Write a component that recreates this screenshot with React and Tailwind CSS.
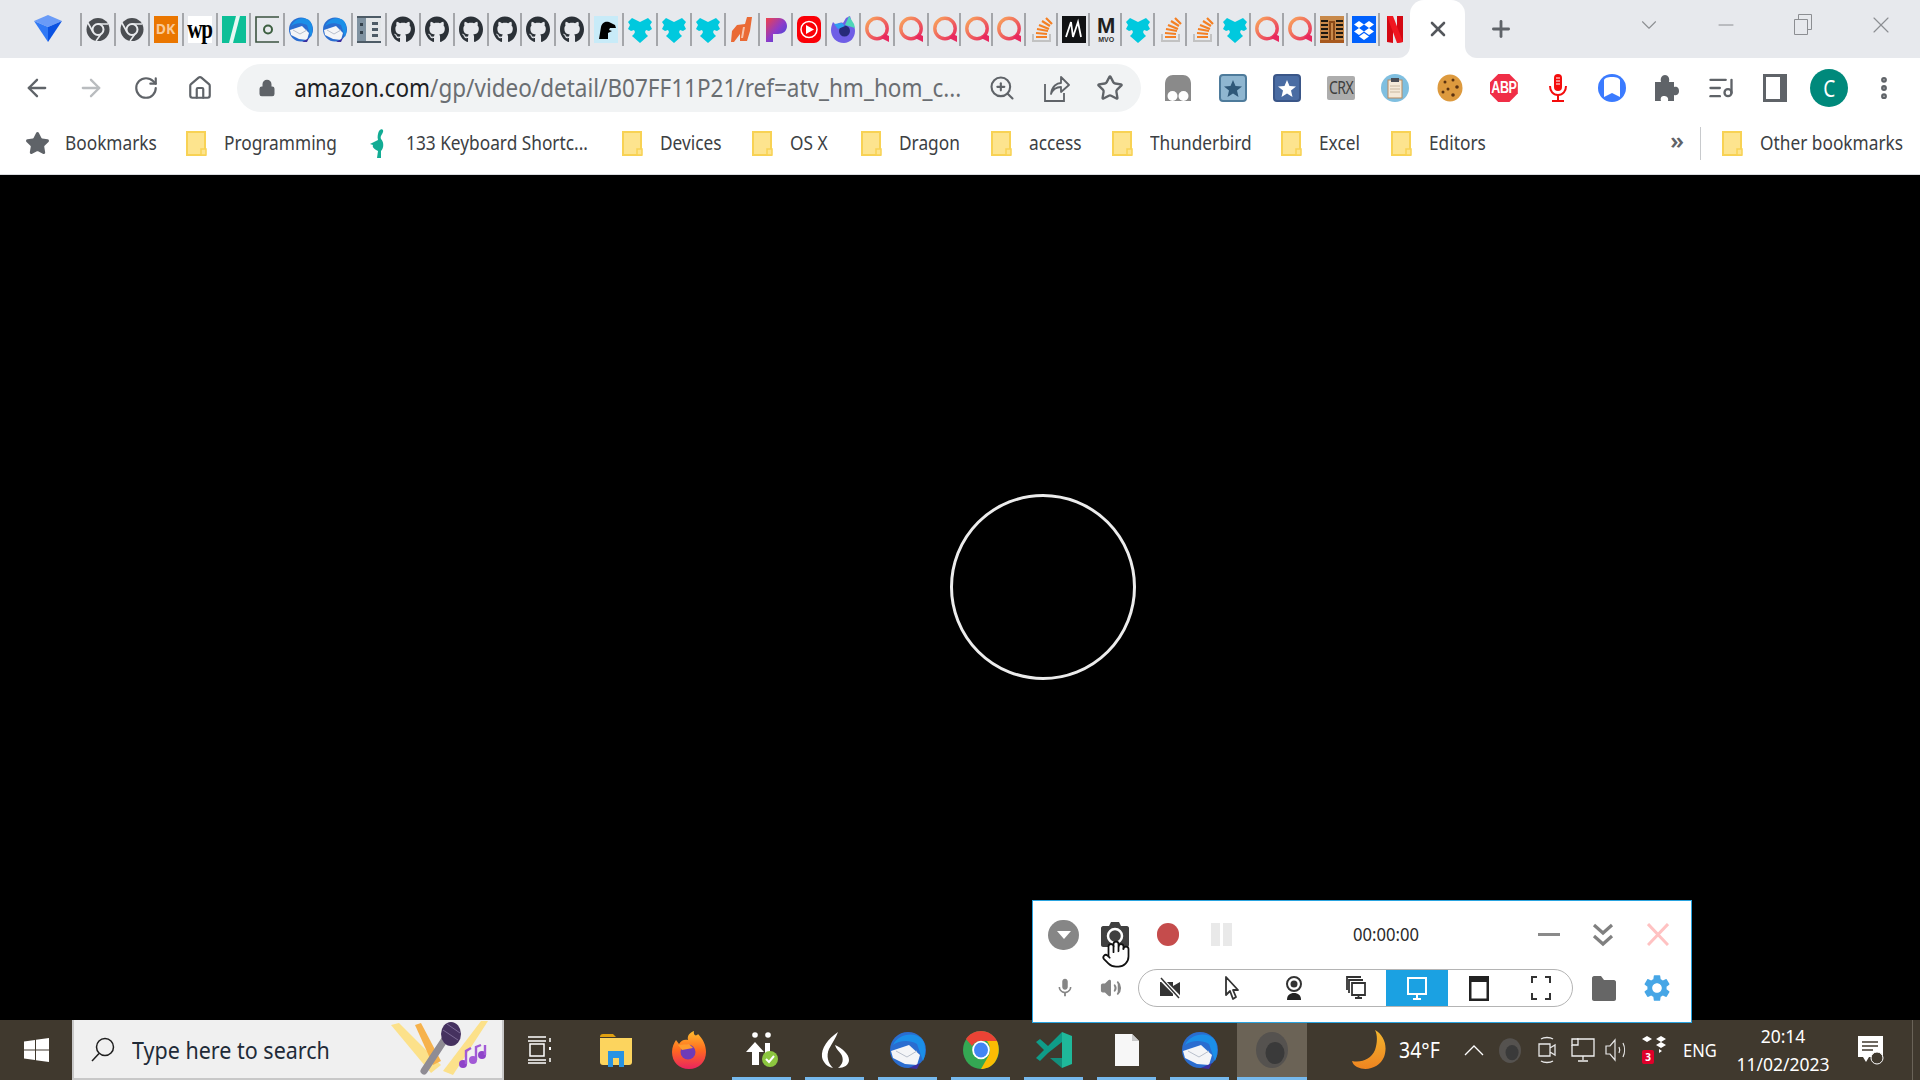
import { ArrowLeft, ArrowRight, RotateCw, House, Lock, ZoomIn, Star, ListMusic, MoreVertical, Plus, X, Minus, ChevronDown, Volume2, Hand } from 'lucide-react';
import { FaGithub } from 'react-icons/fa';
import { MdMic, MdSettings } from 'react-icons/md';

const Svg = ({ w = 24, h = 27, vw = 24, vh = 27, children }) => (
  <svg width={w} height={h} viewBox={`0 0 ${vw} ${vh}`} preserveAspectRatio="none" className="shrink-0">{children}</svg>
);

const Gem = () => (
  <Svg w={28} h={27} vw={28} vh={27}>
    <polygon points="0,6 14,0 28,6 14,12" fill="#6a9bf7" />
    <polygon points="0,6 14,12 14,27" fill="#3179f5" />
    <polygon points="28,6 14,12 14,27" fill="#0b52e2" />
  </Svg>
);

const ChromeGray = () => (
  <Svg>
    <circle cx="12" cy="13.5" r="11.5" fill="#4b4e52" />
    <circle cx="12" cy="13.5" r="5.5" fill="#4b4e52" stroke="#e8eaed" strokeWidth="2" />
    <path d="M12 8H22M7 16L2 7M15 18L10 25" stroke="#e8eaed" strokeWidth="1.6" />
  </Svg>
);

const Dk = () => (
  <div className="w-[24px] h-[27px] bg-[#ea7600] flex items-center overflow-hidden shrink-0">
    <span className="text-[#f9c998] text-[14px] font-bold leading-none pl-[2px]">DK</span>
  </div>
);

const Wp = () => (
  <div className="w-[24px] h-[27px] bg-white flex items-center justify-center shrink-0">
    <span className="inline-block scale-y-125 font-['Liberation_Serif',serif] text-black text-[21px] font-bold leading-none tracking-[-1px]">wp</span>
  </div>
);

const Huff = () => (
  <Svg>
    <rect width="24" height="27" fill="#0dbf97" />
    <polygon points="14,0 18,0 11,27 7,27" fill="#e8f8f3" />
  </Svg>
);

const Outlook = () => (
  <Svg>
    <path d="M24 1H1V26H24" fill="none" stroke="#3c5340" strokeWidth="1.6" />
    <circle cx="13" cy="13.5" r="4" fill="none" stroke="#3c5f40" strokeWidth="2" />
  </Svg>
);

const Thunderbird = () => (
  <Svg>
    <circle cx="12" cy="13.5" r="12" fill="#2a6dd0" />
    <path d="M2 10C6 2 16 0 21 5C24 9 24 16 22 21L18 9C12 6 6 7 2 10Z" fill="#1b8fe8" />
    <path d="M1 14L13 10L20 17L18 24L10 23L2 19Z" fill="#f4f5f7" />
    <path d="M4 14L11 18L18 14" fill="none" stroke="#b9c0cc" strokeWidth="1" />
    <path d="M20 22L18 26L13 26Z" fill="#3a2fa0" />
  </Svg>
);

const GridApp = () => (
  <Svg>
    <rect width="24" height="27" fill="#e3e6e8" />
    <rect x="0" y="1" width="9" height="25" fill="#7f92a1" />
    <rect x="0" y="0" width="24" height="2" fill="#4d5b66" />
    <rect x="0" y="25" width="24" height="2" fill="#4d5b66" />
    <rect x="3" y="7" width="3" height="3" fill="#33414c" />
    <rect x="3" y="15" width="3" height="3" fill="#33414c" />
    <rect x="15" y="6" width="6" height="3" fill="#4d5b66" />
    <rect x="15" y="12" width="6" height="3" fill="#4d5b66" />
    <rect x="15" y="18" width="6" height="3" fill="#4d5b66" />
  </Svg>
);

const Gh = () => <FaGithub size={24} color="#2b3137" preserveAspectRatio="none" className="w-[24px] h-[27px] shrink-0" />;

const Dino = () => (
  <Svg>
    <rect width="24" height="27" fill="#c8ebf8" />
    <path d="M5 23L7 11C8 6 12 5 15 6L21 9L22 12L16 12L15 14L18 15L14 17L14 23Z" fill="#000" />
  </Svg>
);

const PuzzleFav = () => (
  <Svg>
    <path d="M0 6L4 2L8 4L12 6L16 4L20 2L24 6L22 9L24 13L21 15L18 14L17 16L18 18L20 20L12 27L4 20L6 18L7 16L6 14L3 15L0 13L2 9Z" fill="#00c9de" />
  </Svg>
);

const OrangeFav = () => (
  <Svg>
    <path d="M7 9L15 8L17 1L22 1L20 15L17 25L10 25L10 18L4 26L1 26L2 15Z" fill="#ea6a35" />
    <path d="M13 11L15 11L13 22L11 22Z" fill="#f6c3ab" />
  </Svg>
);

const Pandora = () => (
  <Svg>
    <defs>
      <linearGradient id="pand" x1="0" y1="0" x2="1" y2="1">
        <stop offset="0" stopColor="#f0414a" />
        <stop offset="0.5" stopColor="#8f3bc8" />
        <stop offset="1" stopColor="#2a4de0" />
      </linearGradient>
    </defs>
    <path d="M2 2H15C20 2 23 6 23 10C23 15 19 18 14 18H9V26H2Z" fill="url(#pand)" />
  </Svg>
);

const YtMusic = () => (
  <Svg>
    <rect width="24" height="27" rx="7" fill="#fb0007" />
    <circle cx="12" cy="13.5" r="8" fill="none" stroke="#fff" strokeWidth="1.5" />
    <polygon points="9,9 17,13.5 9,18" fill="#fff" />
  </Svg>
);

const Firefox = () => (
  <Svg>
    <path d="M13 27C5 27 0 21 0 14C0 11 1 8 2 6L5 9C7 7 10 6 12 7L15 2L19 0L21 7C23 9 24 12 24 15C24 22 19 27 13 27Z" fill="#6f5ee6" />
    <path d="M14 9L18 0L23 8L24 12Z" fill="#4fd6b8" />
    <circle cx="13.5" cy="15" r="5.5" fill="#272a7a" />
    <path d="M3 8L11 7L14 10L7 13Z" fill="#2f9ff0" />
  </Svg>
);

const QFav = () => (
  <Svg>
    <defs>
      <linearGradient id="qfav" x1="0" y1="0" x2="1" y2="1">
        <stop offset="0" stopColor="#f9a85c" />
        <stop offset="1" stopColor="#e8285f" />
      </linearGradient>
    </defs>
    <circle cx="12" cy="12.5" r="10.2" fill="none" stroke="url(#qfav)" strokeWidth="3.4" />
    <path d="M20 18L24 20V26L16 22Z" fill="#e8285f" />
  </Svg>
);

const SoFav = () => (
  <Svg>
    <path d="M3 18V25H20V18" fill="none" stroke="#c2c2c2" strokeWidth="2" />
    <path d="M6 21H17M6 17L17 18M7 13L18 15M9 9L19 13M12 5L20 10M16 2L22 8" fill="none" stroke="#f48024" strokeWidth="2.2" />
  </Svg>
);

const MFav = () => (
  <Svg>
    <rect width="24" height="27" fill="#111214" />
    <path d="M4 21L9 6L11 21L16 6L19 21" fill="none" stroke="#fff" strokeWidth="1.8" />
  </Svg>
);

const Mvo = () => (
  <div className="w-[24px] h-[27px] flex flex-col items-center justify-between shrink-0">
    <span className="text-[#202020] text-[22px] font-black leading-[20px] font-['Liberation_Sans',sans-serif]">M</span>
    <span className="text-[#303030] text-[7px] font-bold leading-[7px] font-['Liberation_Sans',sans-serif]">MVO</span>
  </div>
);

const ZipFav = () => (
  <Svg>
    <rect width="24" height="27" fill="#c8894a" />
    <path d="M1 5H8M1 9H8M1 13H8M1 17H8M1 21H8M16 5H23M16 9H23M16 13H23M16 17H23M16 21H23" stroke="#1d1810" strokeWidth="1.8" />
    <path d="M10 26V6H14V26" fill="none" stroke="#8b4a18" strokeWidth="2" />
    <rect y="24" width="24" height="3" fill="#a8591e" />
  </Svg>
);

const DropboxFav = () => (
  <Svg>
    <rect width="24" height="27" fill="#0061fe" />
    <path d="M7 5L12 8.500L7 12L2 8.500ZM17 5L22 8.500L17 12L12 8.500ZM7 12L12 15.500L7 19L2 15.500ZM17 12L22 15.500L17 19L12 15.500ZM12 17L17 20.500L12 24L7 20.500Z" fill="#fff" />
  </Svg>
);

const NetflixFav = () => (
  <Svg w={16} vw={16}>
    <path d="M0 0H6V27L0 26ZM10 0H16V26L10 27Z" fill="#d40813" />
    <path d="M0 0H6L16 26L10 27Z" fill="#f01620" />
  </Svg>
);

const tabIcons = [
  ChromeGray, ChromeGray, Dk, Wp, Huff, Outlook, Thunderbird, Thunderbird, GridApp,
  Gh, Gh, Gh, Gh, Gh, Gh, Dino, PuzzleFav, PuzzleFav, PuzzleFav,
  OrangeFav, Pandora, YtMusic, Firefox, QFav, QFav, QFav, QFav, QFav,
  SoFav, MFav, Mvo, PuzzleFav, SoFav, SoFav, PuzzleFav, QFav, QFav, ZipFav, DropboxFav,
];

const TabStrip = () => (
  <div className="h-[58px] bg-[#e7e9ed] flex items-center shrink-0">
    <div className="w-[80px] flex justify-end pr-[18px] -mt-px"><Gem /></div>
    {tabIcons.map((Icon, i) => (
      <div key={i} className={`${i < 25 ? 'w-[33.88px]' : 'w-[32.25px]'} h-[33px] border-l-2 border-[#a4a6aa] flex items-center pl-[4px] shrink-0`}>
        <Icon />
      </div>
    ))}
    <div className="w-[32px] h-[33px] border-l-2 border-[#a4a6aa] flex items-center pl-[7px] shrink-0">
      <NetflixFav />
    </div>
    <div className="relative w-[55px] h-[58px] bg-white rounded-t-[14px] flex items-center justify-center shrink-0">
      <X size={24} strokeWidth={2.6} color="#54575c" />
      <span className="absolute bottom-0 -left-[12px] w-[12px] h-[12px] bg-white" />
      <span className="absolute bottom-0 -left-[12px] w-[12px] h-[12px] bg-[#e7e9ed] rounded-br-[12px]" />
      <span className="absolute bottom-0 -right-[12px] w-[12px] h-[12px] bg-white" />
      <span className="absolute bottom-0 -right-[12px] w-[12px] h-[12px] bg-[#e7e9ed] rounded-bl-[12px]" />
    </div>
    <div className="w-[72px] flex justify-center"><Plus size={26} strokeWidth={2.6} color="#5f6368" /></div>
    <div className="flex-1" />
    <div className="w-[77.500px] flex justify-center -mt-[8px]"><ChevronDown size={26} strokeWidth={1} color="#8c8e92" /></div>
    <div className="w-[77.500px] flex justify-center -mt-[8px]"><Minus size={24} strokeWidth={1} color="#8c8e92" /></div>
    <div className="w-[76px] flex justify-center -mt-[10px]">
      <svg width="18" height="21" viewBox="0 0 18 21" fill="none" stroke="#8c8e92"><path d="M.5 5.500H13.500V20.500H.5ZM4.500 5.500V.5H17.500V15.500H13.500" /></svg>
    </div>
    <div className="w-[79px] flex justify-center -mt-[8px]"><X size={28} strokeWidth={1} color="#8c8e92" /></div>
  </div>
);

const Ghostery = () => (
  <Svg w={26} h={26} vw={26} vh={26}>
    <path d="M0 9C0 3 4 0 8 0H18C22 0 26 3 26 9V26H0Z" fill="#8a8a8a" />
    <ellipse cx="7.500" cy="21" rx="5" ry="5" fill="#fff" />
    <ellipse cx="18.500" cy="21" rx="5" ry="5" fill="#fff" />
  </Svg>
);

const StarBox = ({ bg, border, star }) => (
  <Svg w={28} h={28} vw={28} vh={28}>
    <rect x="1" y="1" width="26" height="26" rx="3" fill={bg} stroke={border} strokeWidth="2" />
    <polygon points="14,6 16.500,12 23,12.500 18,16.500 19.500,23 14,19.500 8.500,23 10,16.500 5,12.500 11.500,12" fill={star} />
  </Svg>
);

const Clipboard = () => (
  <Svg w={28} h={28} vw={28} vh={28}>
    <circle cx="14" cy="14" r="14" fill="#7fbfe0" />
    <rect x="7" y="6" width="14" height="18" fill="#f4e9d8" stroke="#b78a60" />
    <rect x="10" y="4" width="8" height="4" fill="#4a4d55" />
    <path d="M9 12H19M9 15H19M9 18H19" stroke="#c9b8a0" />
  </Svg>
);

const Cookie = () => (
  <Svg w={26} h={28} vw={26} vh={28}>
    <ellipse cx="13" cy="14" rx="12.500" ry="13.500" fill="#dd9a3e" />
    <circle cx="8" cy="8" r="1.500" fill="#5a3210" />
    <circle cx="16" cy="6" r="1.500" fill="#5a3210" />
    <circle cx="20" cy="13" r="1.800" fill="#5a3210" />
    <circle cx="11" cy="15" r="1.500" fill="#5a3210" />
    <circle cx="6" cy="18" r="1.500" fill="#5a3210" />
    <circle cx="16" cy="21" r="1.800" fill="#5a3210" />
  </Svg>
);

const Abp = () => (
  <div className="w-[28px] h-[28px] bg-[#f02e47] flex items-center justify-center [clip-path:polygon(30%_0,70%_0,100%_30%,100%_70%,70%_100%,30%_100%,0_70%,0_30%)] shrink-0">
    <span className="inline-block scale-y-125 text-white text-[12.500px] font-bold leading-none tracking-[-.5px] font-['Liberation_Sans',sans-serif]">ABP</span>
  </div>
);

const RedMic = () => (
  <Svg w={20} h={28} vw={20} vh={28}>
    <rect x="6" y="0" width="8" height="17" rx="4" fill="#f40c0c" />
    <path d="M8 4H12M8 7H12M8 10H12" stroke="#fff" />
    <path d="M2 12C2 17 5 21 10 21C15 21 18 17 18 12" fill="none" stroke="#f40c0c" strokeWidth="2" />
    <path d="M10 21V27M4 27H16" stroke="#f40c0c" strokeWidth="2" />
  </Svg>
);

const Readlater = () => (
  <Svg w={28} h={28} vw={28} vh={28}>
    <circle cx="14" cy="14" r="14" fill="#3b7bff" />
    <path d="M6 6C7 4 9 3 14 3C19 3 21 4 22 6V23L14 19L6 23Z" fill="#fff" />
  </Svg>
);

const PuzzleExt = () => (
  <Svg w={25} h={26} vw={25} vh={26}>
    <path d="M1 7H7C6 3 8 0 11 0C14 0 16 3 15 7H20V12C24 11 25 14 25 16C25 18 24 21 20 20V26H14C15 22 12 21 10 21C8 21 6 22 7 26H1Z" fill="#5f6368" />
  </Svg>
);

const SidePanel = () => (
  <Svg w={24} h={28} vw={24} vh={28}>
    <path d="M0 0H24V28H0Z M3 3V25H17V3Z" fill="#5f6368" fillRule="evenodd" />
  </Svg>
);

const ShareIcon = () => (
  <Svg w={26} h={28} vw={26} vh={28}>
    <path d="M1 10V27H20V19" fill="none" stroke="#5f6368" strokeWidth="1.800" />
    <path d="M7 20C8 12 13 9 17 9V3L25 11L17 18V13C13 13 9 15 7 20Z" fill="none" stroke="#5f6368" strokeWidth="1.800" strokeLinejoin="round" />
  </Svg>
);

const exts = [
  <Ghostery />,
  <StarBox bg="#8fb6d0" border="#4e7b9b" star="#2f5878" />,
  <StarBox bg="#4a6ca3" border="#3a5688" star="#fff" />,
  <div className="w-[28px] h-[24px] bg-[#adadad] rounded-[2px] flex items-center justify-center"><span className="inline-block scale-y-125 text-[#3f3f3f] text-[14px] leading-none tracking-[-.5px]">CRX</span></div>,
  <Clipboard />,
  <Cookie />,
  <Abp />,
  <RedMic />,
  <Readlater />,
  <PuzzleExt />,
  <ListMusic size={28} strokeWidth={2} color="#5f6368" />,
  <SidePanel />,
  <div className="w-[38px] h-[38px] rounded-full bg-[#00897b] flex items-center justify-center"><span className="inline-block scale-y-125 text-white text-[19px] leading-none">C</span></div>,
  <MoreVertical size={28} strokeWidth={3} color="#5f6368" />,
];

const AddressRow = () => (
  <div className="h-[67px] bg-white pt-[6px] pl-[10px] shrink-0">
    <div className="flex items-center h-[48px]">
      <div className="w-[54.300px] flex justify-center"><ArrowLeft size={28} strokeWidth={2} color="#5f6368" /></div>
      <div className="w-[54.300px] flex justify-center"><ArrowRight size={28} strokeWidth={2} color="#b9bcbf" /></div>
      <div className="w-[54.300px] flex justify-center"><RotateCw size={26} strokeWidth={2} color="#5f6368" /></div>
      <div className="w-[54.300px] flex justify-center"><House size={26} strokeWidth={2} color="#5f6368" /></div>
      <div className="ml-[10px] w-[904px] h-[48px] rounded-full bg-[#f1f3f4] flex items-center shrink-0">
        <div className="ml-[21px] w-[18px] flex justify-center"><Lock size={20} fill="#5f6368" color="#5f6368" /></div>
        <div className="ml-[18px] w-[664px] whitespace-nowrap text-[22.500px] leading-none text-[#6a6e72] scale-y-110">
          <span className="text-[#202124]">amazon.com</span>/gp/video/detail/B07FF11P21/ref=atv_hm_hom_c...
        </div>
        <div className="ml-[29px] w-[30px] flex justify-center"><ZoomIn size={28} strokeWidth={1.800} color="#5f6368" /></div>
        <div className="ml-[25px] w-[30px] flex justify-center"><ShareIcon /></div>
        <div className="ml-[23px] w-[30px] flex justify-center"><Star size={28} strokeWidth={2} color="#5f6368" /></div>
      </div>
      <div className="ml-[10px] flex items-center">
        {exts.map((ext, i) => (
          <div key={i} className="w-[54.250px] flex justify-center">{ext}</div>
        ))}
      </div>
    </div>
  </div>
);

const FolderIcon = () => (
  <Svg w={21} h={25} vw={21} vh={25}>
    <path d="M1 1H19V24H1Z" fill="#fde48e" stroke="#f8d254" strokeWidth="2" />
    <path d="M15 24V18H20V24Z" fill="#fde48e" stroke="#f8d254" strokeWidth="1.500" />
  </Svg>
);

const Flamingo = () => (
  <Svg w={20} h={30} vw={20} vh={30}>
    <path d="M10 3C12 0 15 1 14 4C13 7 11 8 12 11C15 14 15 20 12 23V30H8L9 23C5 21 3 19 4 17L1 16L9 12C8 9 9 5 10 3Z" fill="#12ac94" />
  </Svg>
);

const bookmarks = [
  { label: 'Programming', cls: 'w-[183px]', icon: <FolderIcon /> },
  { label: '133 Keyboard Shortc...', cls: 'w-[253px]', icon: <Flamingo /> },
  { label: 'Devices', cls: 'w-[130px]', icon: <FolderIcon /> },
  { label: 'OS X', cls: 'w-[109px]', icon: <FolderIcon /> },
  { label: 'Dragon', cls: 'w-[130px]', icon: <FolderIcon /> },
  { label: 'access', cls: 'w-[121px]', icon: <FolderIcon /> },
  { label: 'Thunderbird', cls: 'w-[169px]', icon: <FolderIcon /> },
  { label: 'Excel', cls: 'w-[110px]', icon: <FolderIcon /> },
  { label: 'Editors', cls: 'w-[100px]', icon: <FolderIcon /> },
];

const BookmarksBar = () => (
  <div className="h-[50px] bg-white border-b border-[#dadce0] pb-[13px] pl-[25px] flex items-center text-[17.300px] text-[#3c4043] whitespace-nowrap shrink-0">
    <div className="w-[161px] flex items-center gap-[15px] shrink-0">
      <Star size={25} fill="#5f6368" color="#5f6368" />
      <span className="inline-block scale-y-110">Bookmarks</span>
    </div>
    {bookmarks.map((b) => (
      <div key={b.label} className={`${b.cls} flex items-center gap-[17px] shrink-0`}>
        {b.icon}
        <span className="inline-block scale-y-110">{b.label}</span>
      </div>
    ))}
    <div className="flex-1" />
    <span className="text-[24px] leading-none font-semibold text-[#5f6368] -mt-[6px]">»</span>
    <div className="ml-[16px] w-px h-[33px] bg-[#c8cacd]" />
    <div className="ml-[21px] w-[198px] flex items-center gap-[17px] shrink-0">
      <FolderIcon />
      <span className="inline-block scale-y-110">Other bookmarks</span>
    </div>
  </div>
);

const Webcam = () => (
  <svg width="18" height="26" viewBox="0 0 18 26">
    <circle cx="9" cy="9" r="7" fill="none" stroke="#333" strokeWidth="2" />
    <circle cx="9" cy="9" r="3.500" fill="#333" />
    <path d="M2 25C2 20 5 18 9 18C13 18 16 20 16 25Z" fill="#222" />
  </svg>
);

const SegCell = ({ active, children }) => (
  <div className={`${active ? 'bg-[#1ba1e2]' : ''} w-[62px] h-full flex items-center justify-center`}>{children}</div>
);

const Recorder = () => (
  <div className="absolute left-[1032px] top-[725px] w-[660px] h-[123px] bg-white border border-[#29a3df] z-10 flex flex-col font-['Noto_Sans',sans-serif]">
    <div className="relative flex items-center h-[62px] shrink-0 pt-[5px]">
      <div className="ml-[15px] w-[31px] h-[30px] rounded-full bg-[#868686] flex items-center justify-center">
        <div className="w-0 h-0 border-l-[7px] border-r-[7px] border-t-[8px] border-l-transparent border-r-transparent border-t-white" />
      </div>
      <div className="ml-[22px] w-[28px]">
        <svg width="28" height="25" viewBox="0 0 28 25">
          <path d="M2 4H8L10 0H18L20 4H26C27 4 28 5 28 6V23C28 24 27 25 26 25H2C1 25 0 24 0 23V6C0 5 1 4 2 4Z" fill="#404040" />
          <circle cx="14" cy="14" r="7" fill="#404040" stroke="#fff" strokeWidth="2.500" />
        </svg>
      </div>
      <div className="ml-[28px] w-[22px] h-[23px] rounded-full bg-[#c54c4c]" />
      <div className="ml-[32px] flex gap-[3px]">
        <div className="w-[9px] h-[23px] bg-[#e9e9e9]" />
        <div className="w-[9px] h-[23px] bg-[#e9e9e9]" />
      </div>
      <div className="ml-[96px] w-[116px] text-center text-[16.600px] leading-none text-[#2a2a2a] scale-y-110">00:00:00</div>
      <div className="ml-[94px] w-[22px] h-[3px] bg-[#8a8a8a]" />
      <div className="ml-[32px]">
        <svg width="22" height="24" viewBox="0 0 22 24" fill="none" stroke="#808080" strokeWidth="3.200">
          <path d="M2 2L11 10L20 2M2 13L11 21L20 13" />
        </svg>
      </div>
      <div className="ml-[33px]">
        <svg width="22" height="23" viewBox="0 0 22 23" fill="none" stroke="#ffc2c2" strokeWidth="3">
          <path d="M1 1L21 22M21 1L1 22" />
        </svg>
      </div>
      <Hand size={30} strokeWidth={1.400} color="#111" fill="#fff" className="absolute left-[68px] top-[38px]" />
    </div>
    <div className="flex items-center h-[38px] mt-[6px] shrink-0">
      <div className="ml-[21px] w-[22px] flex justify-center"><MdMic size={28} color="#868686" /></div>
      <div className="ml-[24px] w-[22px] flex justify-center"><Volume2 size={24} color="#868686" fill="#868686" /></div>
      <div className="ml-[16px] w-[435px] h-[38px] rounded-full border border-[#b4b4b4] flex items-center overflow-hidden shrink-0">
        <SegCell>
          <svg width="20" height="24" viewBox="0 0 20 24">
            <path d="M0 6H13V10L20 6V20L13 16V20H0Z" fill="#333" />
            <path d="M0 2L20 22" stroke="#fff" strokeWidth="4" />
            <path d="M1 2L19 22" stroke="#333" strokeWidth="1.500" />
          </svg>
        </SegCell>
        <SegCell>
          <svg width="14" height="24" viewBox="0 0 14 24"><path d="M1 1V19L5 15L8 23L11 21L8 14H13Z" fill="#fff" stroke="#333" strokeWidth="1.800" strokeLinejoin="round" /></svg>
        </SegCell>
        <SegCell><Webcam /></SegCell>
        <SegCell>
          <svg width="20" height="24" viewBox="0 0 20 24" fill="none" stroke="#333" strokeWidth="1.800">
            <path d="M1 14V1H15M3 17V4H17" />
            <path d="M6 7H19V19H6Z" />
            <path d="M9 22H16M12.500 19V22" />
          </svg>
        </SegCell>
        <SegCell active>
          <svg width="20" height="24" viewBox="0 0 20 24" fill="none" stroke="#fff" strokeWidth="2">
            <path d="M1 2H19V18H1Z" />
            <path d="M6 23H14M10 18V23" />
          </svg>
        </SegCell>
        <SegCell>
          <svg width="20" height="25" viewBox="0 0 20 25"><path d="M0 0H20V25H0Z M2.500 6V22.500H17.500V6Z" fill="#222" fillRule="evenodd" /></svg>
        </SegCell>
        <SegCell>
          <svg width="20" height="24" viewBox="0 0 20 24" fill="none" stroke="#333" strokeWidth="2"><path d="M1 7V1H6M14 1H19V7M19 17V23H14M6 23H1V17" /></svg>
        </SegCell>
      </div>
      <div className="ml-[19px]">
        <svg width="24" height="25" viewBox="0 0 24 25"><path d="M2 0H9L12 4H22C23 4 24 5 24 6V23C24 24 23 25 22 25H2C1 25 0 24 0 23V2C0 1 1 0 2 0Z" fill="#666" /></svg>
      </div>
      <div className="ml-[25px]"><MdSettings size={32} color="#46a6e6" /></div>
    </div>
  </div>
);

const WindowsLogo = () => (
  <svg width="25" height="24" viewBox="0 0 25 24" fill="#fff">
    <path d="M0 3.500L11 2V11.500H0ZM12 1.800L25 0V11.500H12ZM0 12.500H11V22L0 20.500ZM12 12.500H25V24L12 22.200Z" />
  </svg>
);

const SearchIcon = () => (
  <svg width="24" height="25" viewBox="0 0 24 25" fill="none" stroke="#1f1f1f" strokeWidth="1.500">
    <circle cx="14" cy="10" r="8.500" />
    <path d="M8 16.500L1 24" />
  </svg>
);

const Karaoke = () => (
  <svg width="97" height="56" viewBox="0 0 97 56">
    <polygon points="0,4 8,2 50,44 40,52" fill="#fce18a" />
    <polygon points="24,4 30,2 50,40 42,44" fill="#f6b24c" />
    <polygon points="97,0 90,0 52,50 62,54" fill="#fce18a" />
    <path d="M33 50L54 18" stroke="#8f8c94" strokeWidth="7" strokeLinecap="round" />
    <ellipse cx="60" cy="13" rx="10" ry="12" fill="#45315f" />
    <path d="M52 9L67 19M56 3L69 12" stroke="#7c6a96" />
    <circle cx="72" cy="43" r="4" fill="#8e44c9" />
    <circle cx="82" cy="39" r="4" fill="#a25ad6" />
    <circle cx="91" cy="34" r="4" fill="#8e44c9" />
    <path d="M75 43V30L80 27M85 39V26L90 24M94 34V24" stroke="#a25ad6" strokeWidth="2.400" fill="none" />
  </svg>
);

const TaskView = () => (
  <svg width="24" height="28" viewBox="0 0 24 28" fill="none" stroke="#fff" strokeWidth="1.500">
    <path d="M1 1H19M1 5H19M3 8H17V20H3ZM1 24H19M1 27H19" />
    <path d="M23 2V6M23 22V26" />
    <rect x="22" y="11" width="2" height="3" fill="#fff" stroke="none" />
  </svg>
);

const Explorer = () => (
  <svg width="32" height="33" viewBox="0 0 32 33">
    <path d="M0 3C0 1 1 0 3 0H13L16 3H0Z" fill="#e0a010" />
    <path d="M0 4H32V28C32 30 31 31 29 31H3C1 31 0 30 0 28Z" fill="#fcd45e" />
    <path d="M8 33V17H24V33H19V24H13V33Z" fill="#2893e2" />
  </svg>
);

const TaskFirefox = () => (
  <svg width="34" height="38" viewBox="0 0 34 38">
    <defs>
      <linearGradient id="tff" x1="0.500" y1="0" x2="0.500" y2="1">
        <stop offset="0" stopColor="#ffbd2e" />
        <stop offset="0.500" stopColor="#ff6a1f" />
        <stop offset="1" stopColor="#e9235f" />
      </linearGradient>
    </defs>
    <path d="M17 38C7 38 0 31 0 21C0 16 2 12 4 9L7 13C9 9 13 8 16 9C15 5 17 2 22 0C21 4 24 6 26 3C31 8 34 14 34 21C34 31 27 38 17 38Z" fill="url(#tff)" />
    <circle cx="16" cy="21" r="7.500" fill="#6f3bb8" />
    <path d="M6 14L17 13L21 17L10 19Z" fill="#ff9b2e" />
  </svg>
);

const People = () => (
  <svg width="34" height="36" viewBox="0 0 34 36">
    <circle cx="10" cy="3" r="2.800" fill="#fff" />
    <circle cx="23" cy="3" r="2.800" fill="#fff" />
    <path d="M10 10L19 20H14V33H7V20H1Z" fill="#fff" />
    <path d="M20 11H25V24H20Z" fill="#fff" />
    <circle cx="25" cy="27" r="8" fill="#8cc63f" />
    <path d="M21 27L24 30L29 24" fill="none" stroke="#fff" strokeWidth="2" />
  </svg>
);

const DragonIcon = () => (
  <svg width="28" height="36" viewBox="0 0 28 36" fill="#fff">
    <path d="M17 0C7 7 0 16 1 25C2 31 7 35 12 36C7 31 5 24 8 17C11 11 15 6 17 0Z" />
    <path d="M14 13C21 16 28 22 28 28C28 33 23 36 17 36C22 32 23 27 20 22C18 19 15 17 14 13Z" />
  </svg>
);

const TaskThunderbird = () => (
  <svg width="36" height="38" viewBox="0 0 36 38">
    <circle cx="18" cy="19" r="18" fill="#2a6dd0" />
    <path d="M3 14C8 3 24 0 32 8C36 13 36 24 33 30L27 13C18 8 9 10 3 14Z" fill="#1b8fe8" />
    <path d="M1 20L19 14L30 24L27 34L15 33L3 27Z" fill="#f4f5f7" />
    <path d="M6 20L17 26L27 20" fill="none" stroke="#b9c0cc" />
    <path d="M30 32L27 38L19 37Z" fill="#3a2fa0" />
  </svg>
);

const TaskChrome = () => (
  <svg width="36" height="38" viewBox="0 0 36 38">
    <ellipse cx="18" cy="19" rx="18" ry="19" fill="#34a853" />
    <path d="M18 0C25 0 31 4 34 10H18C14 10 11 12 9 15L3 8C6 3 12 0 18 0Z" fill="#ea4335" />
    <path d="M34 10C37 17 36 25 32 31C28 36 23 38 18 38L26 24C28 20 27 14 24 10Z" fill="#fbbc04" />
    <ellipse cx="18" cy="19" rx="8.800" ry="9.300" fill="#fff" />
    <ellipse cx="18" cy="19" rx="7" ry="7.400" fill="#4285f4" />
  </svg>
);

const VsCode = () => (
  <svg width="36" height="36" viewBox="0 0 36 36">
    <path d="M26 0L36 4V32L26 36Z" fill="#1fb89a" />
    <path d="M26 0V10L12 21L4 29L0 26L8 18L0 10L4 7L12 14Z" fill="#0f9c88" />
    <path d="M26 26V36L14 26Z" fill="#128f7c" />
  </svg>
);

const FileIcon = () => (
  <svg width="24" height="32" viewBox="0 0 24 32">
    <path d="M0 0H17L24 7V32H0Z" fill="#f7f7f7" />
    <path d="M17 0V7H24Z" fill="#c9c9c9" />
  </svg>
);

const ObsIcon = ({ w = 32, h = 36 }) => (
  <svg width={w} height={h} viewBox="0 0 32 36">
    <ellipse cx="16" cy="18" rx="16" ry="18" fill="#55524f" />
    <ellipse cx="19" cy="21" rx="9.500" ry="11" fill="#3a3a3a" />
  </svg>
);

const taskIcons = [<People />, <DragonIcon />, <TaskThunderbird />, <TaskChrome />, <VsCode />, <FileIcon />, <TaskThunderbird />];

const Taskbar = () => (
  <div className="h-[60px] bg-[#40392e] flex items-center text-white shrink-0 font-['Noto_Sans',sans-serif]">
    <div className="w-[72px] flex justify-center"><WindowsLogo /></div>
    <div className="w-[432px] h-full bg-[#f0f0f0] border-2 border-[#c8c8c8] border-t-0 flex items-center shrink-0">
      <div className="ml-[17px]"><SearchIcon /></div>
      <span className="ml-[17px] inline-block scale-y-110 pt-[2px] text-[21.500px] leading-none text-[#1f2b38]">Type here to search</span>
      <div className="ml-auto mr-[14px]"><Karaoke /></div>
    </div>
    <div className="w-[70px] flex justify-center"><TaskView /></div>
    <div className="ml-[5px] w-[73px] flex justify-center"><Explorer /></div>
    <div className="w-[73px] flex justify-center"><TaskFirefox /></div>
    {taskIcons.map((icon, i) => (
      <div key={i} className="w-[73px] h-full flex justify-center shrink-0">
        <div className="w-[59px] h-full border-b-[3px] border-[#76b9ed] flex items-center justify-center pt-[3px]">{icon}</div>
      </div>
    ))}
    <div className="ml-[1px] w-[70px] h-full bg-[#6b6356] border-b-[3px] border-[#76b9ed] flex items-center justify-center pt-[3px] shrink-0">
      <ObsIcon />
    </div>
    <div className="ml-[45px]">
      <svg width="34" height="40" viewBox="0 0 34 40">
        <defs>
          <linearGradient id="moon" x1="0.500" y1="0" x2="0.500" y2="1">
            <stop offset="0" stopColor="#f3b62e" />
            <stop offset="1" stopColor="#ef8420" />
          </linearGradient>
        </defs>
        <path d="M23 0C32 5 36 16 32 27C28 37 15 42 5 37C2 35 1 34 0 31C10 33 19 29 23 20C25 14 26 6 23 0Z" fill="url(#moon)" />
      </svg>
    </div>
    <span className="ml-[13px] w-[40px] text-[19.500px] leading-none whitespace-nowrap scale-y-110">34°F</span>
    <div className="ml-[25px] w-[20px]">
      <svg width="20" height="11" viewBox="0 0 20 11" fill="none" stroke="#fff" strokeWidth="1.300"><path d="M1 10L10 1L19 10" /></svg>
    </div>
    <div className="ml-[15px]"><ObsIcon w={22} h={25} /></div>
    <div className="ml-[17px]">
      <svg width="18" height="28" viewBox="0 0 18 28" fill="none" stroke="#e8e8e8" strokeWidth="1.300">
        <path d="M1 8H12V20H1ZM12 12L17 9V19L12 16M3 3C6 1 12 1 15 3M3 25C6 27 12 27 15 25" />
      </svg>
    </div>
    <div className="ml-[15px]">
      <svg width="24" height="24" viewBox="0 0 24 24" fill="none" stroke="#f0f0f0" strokeWidth="1.300">
        <path d="M6 1H23V18H1V7M12 18V22M7 23H17" />
        <path d="M1 1H7V7H1Z" />
      </svg>
    </div>
    <div className="ml-[10px]">
      <svg width="22" height="24" viewBox="0 0 22 24" fill="none" stroke="#e8e8e8" strokeWidth="1.200">
        <path d="M1 8H5L10 2V22L5 16H1Z" />
        <path d="M14 9C15 11 15 13 14 15M18 5C20 9 20 15 18 19" />
      </svg>
    </div>
    <div className="relative ml-[15px] w-[24px] h-[28px]">
      <svg width="24" height="20" viewBox="0 0 24 20" fill="#fff">
        <path d="M5 0L10 3L5 6L0 3ZM19 0L24 3L19 6L14 3ZM19 6L24 9L19 12L14 9ZM17 13L20 15L17 17Z" />
      </svg>
      <div className="absolute left-0 bottom-0 w-[12px] h-[14px] bg-[#e0002a] rounded-[2px] flex items-center justify-center text-[10px] font-bold leading-none">3</div>
    </div>
    <span className="ml-[17px] w-[34px] text-[16.500px] leading-none scale-y-110">ENG</span>
    <div className="ml-[16px] w-[100px] flex flex-col items-center gap-[7px] text-[17.500px] leading-[21px] whitespace-nowrap">
      <span>20:14</span>
      <span>11/02/2023</span>
    </div>
    <div className="ml-[25px] relative">
      <svg width="26" height="29" viewBox="0 0 26 29" fill="#fff">
        <path d="M0 0H25V21H11L8 26L5 21H0Z" />
        <path d="M4 6H20M4 10H20M4 14H15" stroke="#40392e" strokeWidth="1.300" />
        <circle cx="19" cy="22" r="6" fill="#40392e" stroke="#fff" />
      </svg>
    </div>
    <div className="ml-auto mr-[7px] w-px h-full bg-[#6a6358]" />
  </div>
);

const App = () => {
  return (
    <div className="w-screen h-screen flex flex-col overflow-hidden bg-black font-['Noto_Sans',sans-serif]">
      <TabStrip />
      <AddressRow />
      <BookmarksBar />
      <div className="relative flex-1 bg-black">
        <div className="absolute left-[950px] top-[319px] w-[186px] h-[186px] rounded-full border-[3px] border-[#ececec]" />
        <Recorder />
      </div>
      <Taskbar />
    </div>
  );
};

export default App;
